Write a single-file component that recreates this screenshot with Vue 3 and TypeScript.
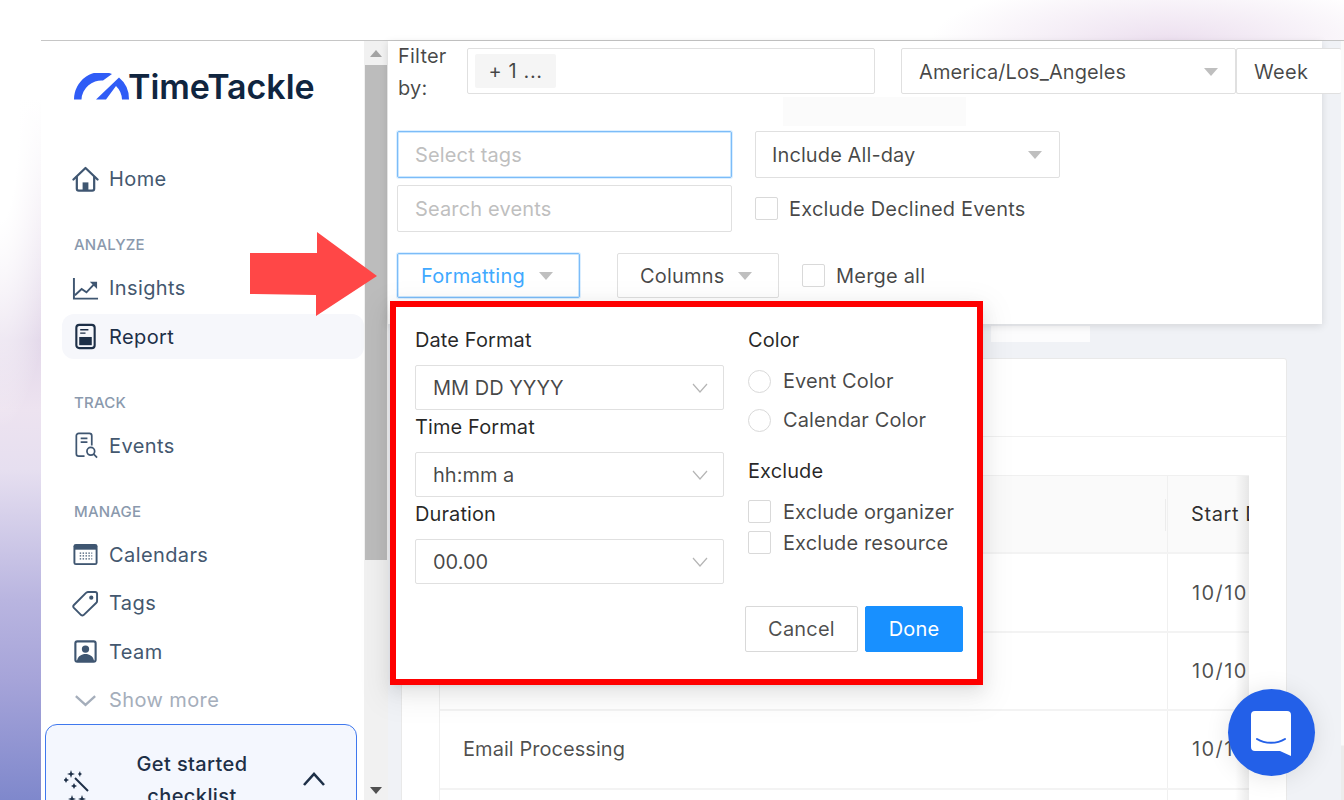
<script setup lang="ts">
interface NavItem { label: string; icon: string; active?: boolean }
interface NavGroup { title: string; items: NavItem[] }

const groups: NavGroup[] = [
  { title: 'Analyze', items: [{ label: 'Insights', icon: 'insights' }, { label: 'Report', icon: 'report', active: true }] },
  { title: 'Track', items: [{ label: 'Events', icon: 'events' }] },
  { title: 'Manage', items: [{ label: 'Calendars', icon: 'calendars' }, { label: 'Tags', icon: 'tags' }, { label: 'Team', icon: 'team' }] },
]
const fields = [
  { label: 'Date Format', value: 'MM DD YYYY' },
  { label: 'Time Format', value: 'hh:mm a' },
  { label: 'Duration', value: '00.00' },
]
const rows = [
  { name: '', date: '10/10' },
  { name: '', date: '10/10' },
  { name: 'Email Processing', date: '10/10' },
  { name: '', date: '' },
]
</script>

<template>
  <div class="page">
    <div class="frame">
      <aside class="sidebar">
        <div class="logo">
          <svg class="logo-mark" width="56" height="27" viewBox="0 0 56 27">
            <path d="M0 26.500 A27.500 27.500 0 0 1 38 1 L29 7.500 A20 20 0 0 0 7.500 26.500 Z" fill="#2f5cf6" />
            <path d="M22 26.500 L45 4.500 A27.500 27.500 0 0 1 55 26.500 L48 26.500 A20 20 0 0 0 42 13 L32 26.500 Z" fill="#2f5cf6" />
          </svg>
          <span class="logo-text">TimeTackle</span>
        </div>

        <a class="item">
          <svg class="icon" viewBox="0 0 28 28" fill="none" stroke="#3f5671" stroke-width="2.300" stroke-linejoin="round" stroke-linecap="round">
            <path d="M1.500 14 L14 2 L26.500 14" />
            <path d="M5 11.500 V23.500 a2 2 0 0 0 2 2 H21 a2 2 0 0 0 2 -2 V11.500" />
            <rect x="11" y="17" width="6" height="8" fill="#3f5671" stroke="none" />
          </svg>
          <span>Home</span>
        </a>

        <section v-for="g in groups" :key="g.title" class="group">
          <h4 class="group-title">{{ g.title }}</h4>
          <a v-for="it in g.items" :key="it.label" class="item" :class="{ active: it.active }">
            <svg v-if="it.icon === 'insights'" class="icon" viewBox="0 0 28 28" fill="none" stroke="#3f5671" stroke-width="2">
              <path d="M2 3 V24.500 H27" />
              <path d="M3 21 L10 14.500 L15 18 L24 8.500" />
              <path d="M18.500 7 H26 V14.500 Z" fill="#3f5671" stroke="none" />
            </svg>
            <svg v-else-if="it.icon === 'report'" class="icon" viewBox="0 0 28 28" fill="none" stroke="#1d2f47" stroke-width="2.200">
              <rect x="4.500" y="2" width="19" height="24" rx="3" />
              <path d="M8.500 7 H17 M8.500 10.500 H14" stroke-width="1.500" />
              <rect x="7.500" y="14.500" width="13" height="8.500" fill="#1d2f47" stroke="none" />
            </svg>
            <svg v-else-if="it.icon === 'events'" class="icon" viewBox="0 0 28 28" fill="none" stroke="#3f5671" stroke-width="1.800">
              <path d="M13 25 H7 a2.500 2.500 0 0 1 -2.500 -2.500 V4 a2.500 2.500 0 0 1 2.500 -2.500 H18 a2.500 2.500 0 0 1 2.500 2.500 V14" />
              <path d="M9 6.500 H16 M9 10.500 H16" />
              <circle cx="19.500" cy="20" r="4" />
              <path d="M22.500 23 L26 26.500" />
            </svg>
            <svg v-else-if="it.icon === 'calendars'" class="icon" viewBox="0 0 28 28" fill="none">
              <rect x="1.500" y="3" width="25" height="22" rx="2.500" fill="#3f5671" />
              <rect x="3.500" y="9" width="21" height="14" fill="#fff" />
              <path d="M8 12.500 H21 M8 15.500 H21 M8 18.500 H21" stroke="#3f5671" stroke-width="1.300" stroke-dasharray="1.500 1.500" />
            </svg>
            <svg v-else-if="it.icon === 'tags'" class="icon" viewBox="0 0 28 28" fill="none" stroke="#3f5671" stroke-width="2" stroke-linejoin="round">
              <path d="M2 15.500 L14.500 3 a3 3 0 0 1 2 -1 H24 a2 2 0 0 1 2 2 V11.500 a3 3 0 0 1 -1 2 L12 26 a2 2 0 0 1 -2.500 0 L2 18.500 a2.200 2.200 0 0 1 0 -3 Z" />
              <circle cx="20" cy="8" r="1.200" fill="#3f5671" />
            </svg>
            <svg v-else class="icon" viewBox="0 0 28 28" fill="none">
              <rect x="3.500" y="3.500" width="21" height="21" rx="2" stroke="#3f5671" stroke-width="2.200" />
              <circle cx="14" cy="11.500" r="3.800" fill="#3f5671" />
              <path d="M5 24 C6 18.500 10 16.500 14 16.500 C18 16.500 22 18.500 23 24 Z" fill="#3f5671" />
            </svg>
            <span>{{ it.label }}</span>
          </a>
          <a v-if="g.title === 'Manage'" class="item more">
            <svg class="icon" viewBox="0 0 28 28" fill="none" stroke="#a5aebb" stroke-width="2.400">
              <path d="M4 9.500 L14 18.500 L24 9.500" />
            </svg>
            <span>Show more</span>
          </a>
        </section>

        <div class="checklist">
          <svg class="wand" width="26" height="40" viewBox="0 0 26 40" fill="#1d2f47">
            <path d="M11 9 L24 22" stroke="#1d2f47" stroke-width="2" />
            <path d="M7 1 L8 4 L11 5 L8 6 L7 9 L6 6 L3 5 L6 4 Z M2 8 L3 10 L5 11 L3 12 L2 14 L1 12 L-1 11 L1 10 Z M10 14 L11 16 L13 17 L11 18 L10 20 L9 18 L7 17 L9 16 Z M16 2 L16.500 4 L18 5 L16.500 6 L16 8 L15 6 L14 5 L15 4 Z" />
            <path d="M8 26 L9 29 L12 30 L9 31 L8 34 L7 31 L4 30 L7 29 Z M18 26 L19 29 L22 30 L19 31 L18 34 L17 31 L14 30 L17 29 Z" />
          </svg>
          <span class="checklist-text">Get started checklist</span>
          <svg class="chev" width="24" height="16" viewBox="0 0 24 16" fill="none" stroke="#1d2f47" stroke-width="2.600">
            <path d="M2 14 L12 3 L22 14" />
          </svg>
        </div>
      </aside>

      <div class="scrollbar">
        <i class="arrow up"></i>
        <div class="thumb"></div>
        <i class="arrow down"></i>
      </div>

      <main class="main">
        <div class="card">
          <div class="card-head"></div>
          <div class="table">
            <div class="tr head">
              <div class="td first"><i class="sep"></i></div>
              <div class="td clip">Start Date</div>
            </div>
            <div v-for="(r, i) in rows" :key="i" class="tr">
              <div class="td first">{{ r.name }}</div>
              <div class="td clip date">{{ r.date }}</div>
            </div>
            <i class="fade"></i>
          </div>
        </div>

        <div class="sliver"></div>

        <div class="filters">
          <i class="ghost"></i>
          <div class="row top">
            <div class="filter-label">Filter by:</div>
            <div class="box tagbox"><span class="tag">+ 1 ...</span></div>
            <div class="box tz"><span>America/Los_Angeles</span><i class="caret"></i></div>
            <div class="box week">Week</div>
          </div>
          <div class="mid">
            <div class="box blue placeholder">Select tags</div>
            <div class="box allday"><span>Include All-day</span><i class="caret"></i></div>
            <div class="box search placeholder">Search events</div>
            <label class="check"><i class="cb"></i>Exclude Declined Events</label>
          </div>
          <div class="row actions">
            <div class="box btn blue fmt"><span>Formatting</span><i class="caret"></i></div>
            <div class="box btn cols"><span>Columns</span><i class="caret"></i></div>
            <label class="check"><i class="cb"></i>Merge all</label>
          </div>
        </div>

        <div class="popover">
          <div class="col-left">
            <div v-for="f in fields" :key="f.label" class="field">
              <div class="label">{{ f.label }}</div>
              <div class="box dd">
                <span>{{ f.value }}</span>
                <svg width="16" height="10" viewBox="0 0 16 10" fill="none" stroke="#b5b5b5" stroke-width="1.200"><path d="M1 1 L8 9 L15 1" /></svg>
              </div>
            </div>
          </div>
          <div class="col-right">
            <div class="label">Color</div>
            <div class="opts radios">
              <label class="opt"><i class="radio"></i>Event Color</label>
              <label class="opt"><i class="radio"></i>Calendar Color</label>
            </div>
            <div class="label excl">Exclude</div>
            <div class="opts checks">
              <label class="opt"><i class="cb small"></i>Exclude organizer</label>
              <label class="opt"><i class="cb small"></i>Exclude resource</label>
            </div>
          </div>
          <div class="buttons">
            <button class="b cancel">Cancel</button>
            <button class="b done">Done</button>
          </div>
        </div>
      </main>

      <div class="edge"></div>
    </div>

    <svg class="red-arrow" width="130" height="86" viewBox="0 0 130 86">
      <polygon points="0,21 67,21 67,0 127,44 66,84 66,63 0,62" fill="#ff4747" />
    </svg>

    <div class="chat">
      <svg width="44" height="48" viewBox="0 0 44 48">
        <path d="M5 2 H37 a4 4 0 0 1 4 4 V47 L30 42 H5 a4 4 0 0 1 -4 -4 V6 a4 4 0 0 1 4 -4 Z" fill="#fff" />
        <path d="M7 30 C15 35 27 35 35 30" fill="none" stroke="#2360e8" stroke-width="2" stroke-linecap="round" />
      </svg>
    </div>
  </div>
</template>

<style>
html, body { margin: 0; overflow: hidden; }
</style>

<style scoped>
.page {
  position: relative;
  width: 1344px;
  height: 800px;
  box-sizing: border-box;
  overflow: hidden;
  padding: 40px 0 0 41px;
  font-family: Inter, "Noto Sans", sans-serif;
  font-size: 20px;
  color: rgba(0, 0, 0, 0.72);
  background:
    radial-gradient(ellipse 60px 300px at 0 130px, #fff 30%, rgba(255, 255, 255, 0) 100%),
    radial-gradient(ellipse 240px 64px at 1170px 42px, #ecdfef 0%, rgba(236, 223, 239, 0) 100%),
    linear-gradient(to bottom, #fff 0, #fff 100px, #f3eef5 200px, #e3d8ea 340px, #ede3f0 410px, #e6dff0 470px, #b9b5e0 600px, #a6a4d9 680px, #7f88cc 800px);
}
.frame {
  display: flex;
  height: 760px;
  border-top: 1px solid #c6c6c6;
}
.sidebar {
  width: 323px;
  flex: none;
  background: #fff;
  overflow: hidden;
}
.logo {
  display: flex;
  align-items: flex-end;
  height: 30px;
  margin: 31px 0 54.5px 33px;
}
.logo-mark { margin-right: -2px; margin-bottom: 2px; flex: none; }
.logo-text {
  font-size: 34px;
  line-height: 30px;
  font-weight: 600;
  color: #10253f;
  letter-spacing: -0.05px;
}
.item {
  display: flex;
  align-items: center;
  gap: 10px;
  height: 45px;
  margin: 0 0 3.5px 21px;
  padding-left: 10px;
  border-radius: 12px;
  color: #44586f;
  letter-spacing: 0.4px;
}
.item.active { background: #f6f7fb; color: #1d2f47; }
.item.more { color: #a5aebb; margin-bottom: 1px; }
.icon { width: 27px; height: 27px; flex: none; }
.group { margin-top: 33.500px; }
.group-title {
  margin: 0 0 10.5px 33px;
  height: 20px;
  line-height: 20px;
  font-size: 15px;
  font-weight: 500;
  letter-spacing: 0.2px;
  color: #8a99ad;
  text-transform: uppercase;
}
.checklist {
  display: flex;
  align-items: flex-start;
  width: 312px;
  height: 100px;
  box-sizing: border-box;
  margin-left: 4px;
  padding: 23px 30px 0 18px;
  background: #f4f7fe;
  border: 1px solid #3f78ee;
  border-radius: 12px;
}
.wand { margin-top: 21px; flex: none; }
.checklist-text {
  flex: 1;
  text-align: center;
  font-weight: 500;
  line-height: 32px;
  letter-spacing: 0.4px;
  color: #1d2f47;
  padding: 0 28px 0 20px;
  box-sizing: border-box;
}
.chev { flex: none; margin-top: 23px; }
.scrollbar {
  position: relative;
  width: 24px;
  flex: none;
  background: #f1f1f1;
  display: flex;
  flex-direction: column;
  align-items: center;
}
.thumb { width: 22px; height: 495px; margin-top: 0; background: #bcbcbc; }
.arrow { width: 0; height: 0; border-left: 6px solid transparent; border-right: 6px solid transparent; }
.arrow.up { border-bottom: 7px solid #a3a3a3; margin: 9px 0 8px; }
.arrow.down { border-top: 7px solid #505050; margin-top: 227px; }
.main {
  position: relative;
  flex: 1;
  min-width: 0;
  background: #f0f2f6;
}
.edge {
  width: 3px;
  flex: none;
  background: linear-gradient(to bottom, #fafafa 0, #fafafa 704px, #ececec 705px);
}
.card {
  width: 886px;
  height: 445px;
  box-sizing: border-box;
  margin: 317px 0 0 13px;
  background: #fff;
  border: 1px solid #e9e9e9;
  border-radius: 3px;
}
.card-head { height: 77px; border-bottom: 1px solid #f0f0f0; margin-bottom: 38px; }
.table { position: relative; width: 809px; margin-left: 37px; border-left: 1px solid #f0f0f0; border-top: 1px solid #f0f0f0; }
.tr { display: flex; height: 78.4px; border-bottom: 2px solid #f3f3f3; box-sizing: border-box; color: rgba(0, 0, 0, 0.7); }
.tr.head { background: #fafafa; color: rgba(0, 0, 0, 0.82); }
.td { display: flex; align-items: center; box-sizing: border-box; }
.first { position: relative; width: 728px; padding-left: 23px; border-right: 1px solid #f0f0f0; flex: none; letter-spacing: 0.05px; }
.sep { position: absolute; right: 1px; top: 23px; height: 32px; width: 1px; background: #ececec; }
.clip { flex: 1; min-width: 0; overflow: hidden; white-space: nowrap; padding-left: 23px; letter-spacing: 0.6px; }
.date { padding-left: 24px; letter-spacing: 1.4px; }
.fade { position: absolute; right: 0; top: 0; bottom: 0; width: 14px; background: linear-gradient(to right, rgba(0, 0, 0, 0), rgba(0, 0, 0, 0.08)); }
.sliver { position: absolute; left: 603px; top: 285px; width: 99px; height: 16px; background: #fcfcfd; }
.filters {
  position: absolute;
  left: 0;
  top: 0;
  z-index: 2;
  width: 934px;
  height: 283px;
  box-sizing: border-box;
  padding: 7px 0 0 9px;
  background: #fff;
  box-shadow: 0 2px 8px rgba(0, 0, 0, 0.12);
}
.ghost { position: absolute; left: 395px; top: 56px; width: 183px; height: 29px; background: #fbfbfb; }
.row { display: flex; align-items: center; }
.box {
  display: flex;
  flex: none;
  align-items: center;
  justify-content: space-between;
  box-sizing: border-box;
  background: #fff;
  border: 1px solid #e0e0e0;
  border-radius: 2px;
  padding: 0 17px;
  white-space: nowrap;
}
.filter-label { width: 70px; flex: none; margin-top: 2px; line-height: 32px; padding-left: 1px; box-sizing: border-box; white-space: normal; padding-right: 10px; letter-spacing: 0.2px; }
.top { height: 46px; }
.top .box { height: 46px; padding-top: 1px; }
.box.tagbox { width: 408px; margin-right: 26px; justify-content: flex-start; padding: 0 7px; }
.tag { display: block; padding: 0 13.500px; height: 34px; line-height: 34px; background: #f5f5f5; border-radius: 2px; letter-spacing: 0.6px; }
.tz { width: 335px; letter-spacing: 0.1px; }
.box.week { width: 105px; padding-left: 17px; border-right: 0; letter-spacing: 0.3px; }
.mid {
  display: grid;
  grid-template-columns: 335px auto;
  column-gap: 23px;
  row-gap: 7px;
  justify-content: start;
  margin-top: 37px;
}
.mid .box { height: 47px; padding-top: 1px; }
.box.blue { border: 1px solid #7cbcf8; box-shadow: inset 0 0 0 1px rgba(64, 169, 255, 0.28), 0 0 0 1px rgba(64, 169, 255, 0.18); }
.placeholder { color: #bfbfbf; letter-spacing: 0.15px; }
.allday { width: 305px; padding-left: 16px; letter-spacing: 0.1px; }
.check { display: flex; align-items: center; gap: 11px; letter-spacing: 0.2px; }
.cb { display: block; width: 23px; height: 23px; box-sizing: border-box; background: #fff; border: 1px solid #d9d9d9; border-radius: 2px; flex: none; }
.caret { display: block; width: 0; height: 0; border-left: 7px solid transparent; border-right: 7px solid transparent; border-top: 8px solid #bfbfbf; }
.actions { margin-top: 21px; }
.btn { height: 45px; padding: 0 26px 0 23px; letter-spacing: 0.2px; }
.fmt { width: 183px; margin-right: 37px; color: #40a9ff; letter-spacing: 0.3px; }
.box.cols { width: 162px; margin-right: 23px; padding-left: 22px; }
.popover {
  position: absolute;
  left: 2px;
  top: 260px;
  z-index: 3;
  width: 593px;
  height: 384px;
  box-sizing: border-box;
  padding: 19px 14px 0 19px;
  display: grid;
  grid-template-columns: 309px 215px;
  column-gap: 24px;
  align-content: start;
  background: #fff;
  border: 6px solid #fe0000;
  box-shadow: 0 3px 6px -4px rgba(0, 0, 0, 0.12), 0 6px 16px rgba(0, 0, 0, 0.08), 0 9px 28px 8px rgba(0, 0, 0, 0.05);
}
.label { height: 26px; line-height: 28px; color: rgba(0, 0, 0, 0.85); letter-spacing: 0.1px; }
.field .label { margin-bottom: 13px; }
.field { margin-bottom: 3px; }
.box.dd { height: 45px; padding: 0 15px 0 17px; letter-spacing: 0; }
.opts { display: flex; flex-direction: column; }
.opt { display: flex; align-items: center; gap: 12px; letter-spacing: 0.1px; }
.radios { margin-top: 9.500px; }
.radios .opt { height: 39px; }
.radio { display: block; width: 23px; height: 23px; box-sizing: border-box; border: 1px solid #d9d9d9; border-radius: 50%; flex: none; }
.excl { margin-top: 17px; }
.checks { margin-top: 13.500px; }
.checks .opt { height: 31px; }
.buttons {
  grid-column: 1 / -1;
  display: flex;
  justify-content: flex-end;
  gap: 7px;
  margin-top: 19px;
  height: 46px;
}
.b {
  font: inherit;
  height: 46px;
  border-radius: 2px;
  padding: 0;
  letter-spacing: 0.2px;
}
.cancel { width: 113px; background: #fff; border: 1px solid #d9d9d9; color: rgba(0, 0, 0, 0.7); }
.done { width: 98px; background: #1890ff; border: 1px solid #1890ff; color: #fff; }
.red-arrow { position: absolute; left: 250px; top: 232px; z-index: 5; }
.chat {
  position: absolute;
  left: 1228px;
  top: 689px;
  z-index: 6;
  width: 87px;
  height: 87px;
  border-radius: 50%;
  background: #2360e8;
  display: flex;
  align-items: center;
  justify-content: center;
  box-shadow: 0 2px 24px rgba(0, 0, 0, 0.1);
}
</style>
